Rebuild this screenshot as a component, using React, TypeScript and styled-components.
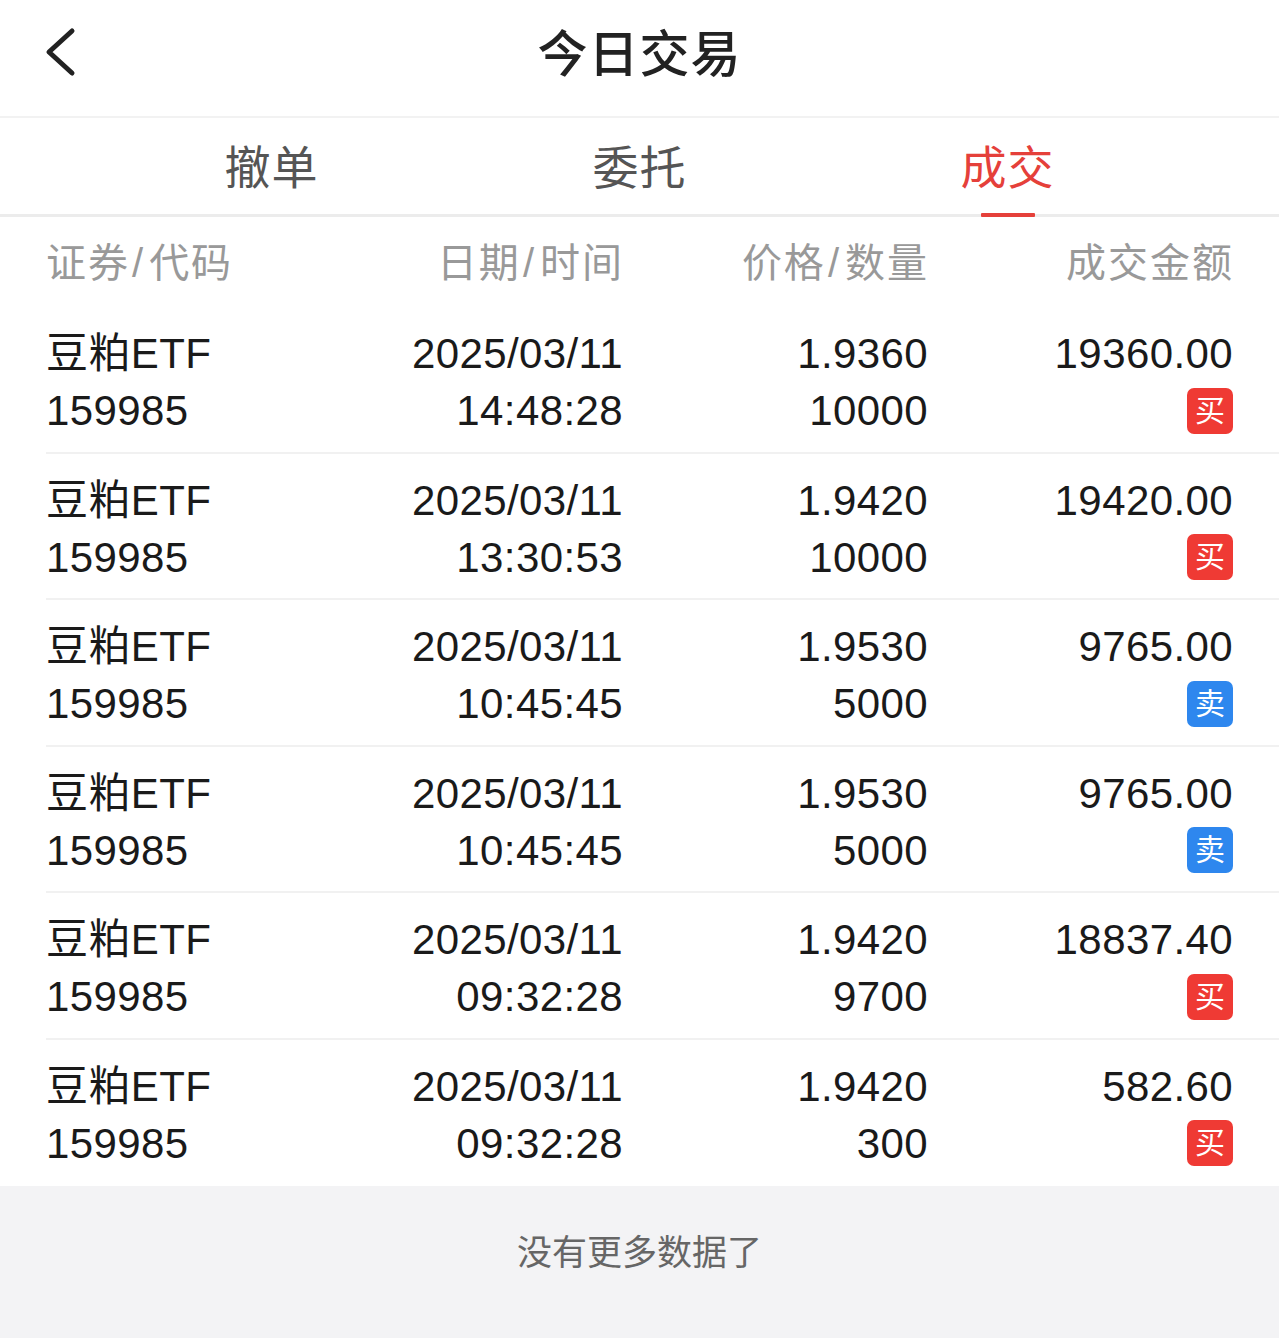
import React from 'react';
import styled, { createGlobalStyle, css } from 'styled-components';

const GlobalStyle = createGlobalStyle`
  html, body {
    margin: 0;
    padding: 0;
    background: #ffffff;
  }
  body {
    font-family: 'Liberation Sans', 'Noto Sans CJK SC', sans-serif;
    color: #1a1a1a;
  }
`;

const Page = styled('div')`
  width: 100%;
  min-height: 1338px;
  background: #ffffff;
  display: flex;
  flex-direction: column;
`;

const NavBar = styled('header')`
  height: 116px;
  display: grid;
  grid-template-columns: 1fr auto 1fr;
  align-items: center;
  padding: 0 40px;
  box-sizing: border-box;
`;

const BackButton = styled('button')`
  justify-self: start;
  display: flex;
  align-items: center;
  padding: 0;
  border: none;
  background: none;
  cursor: pointer;
  margin-top: -13px;
`;

const Title = styled('h1')`
  margin: 0;
  font-size: 50px;
  font-weight: 500;
  color: #222222;
  letter-spacing: 1px;
  margin-top: -17px;
`;

const TabBar = styled('nav')`
  height: 101px;
  box-sizing: border-box;
  border-top: 2px solid #f2f2f2;
  border-bottom: 3px solid #ececec;
  display: grid;
  grid-template-columns: repeat(3, 368px);
  justify-content: center;
`;

const Tab = styled('div')<{ $active?: boolean }>`
  position: relative;
  display: flex;
  align-items: center;
  justify-content: center;
  font-size: 46px;
  color: ${(p) => (p.$active ? '#e5403a' : '#555555')};
  padding-bottom: 4px;
  letter-spacing: 1px;

  ${(p) =>
    p.$active &&
    css`
      &::after {
        content: '';
        position: absolute;
        left: 50%;
        bottom: -3px;
        width: 54px;
        height: 4px;
        margin-left: -27px;
        background: #e5403a;
        border-radius: 1px;
      }
    `}
`;

const columns = css`
  display: grid;
  grid-template-columns: 288px 288px 305px 305px;
`;

const HeadRow = styled('div')`
  ${columns}
  height: 90px;
  align-items: center;
  padding: 0 47px 0 46px;
  font-size: 40px;
  letter-spacing: 2px;
  color: #999999;
  padding-bottom: 4px;
  box-sizing: border-box;
`;

const Cell = styled('div')<{ $align?: 'left' | 'right' }>`
  text-align: ${(p) => p.$align ?? 'right'};
  white-space: nowrap;
  margin-right: ${(p) => (p.$align === 'left' ? '0' : '-2px')};
`;

const Slash = styled('span')`
  margin: 0 4px 0 2px;
`;

const List = styled('div')`
  display: flex;
  flex-direction: column;
`;

const Row = styled('div')`
  ${columns}
  margin-left: 46px;
  padding: 18px 47px 12.5px 0;
  border-bottom: 2px solid #f1f1f1;
  font-size: 42px;
  line-height: 57px;
  letter-spacing: 0.4px;
  color: #1a1a1a;

  &:last-child {
    border-bottom: none;
    padding-bottom: 14.5px;
  }
`;

const Line = styled('div')`
  height: 57px;
  display: flex;
  align-items: center;
`;

const Stack = styled('div')<{ $align?: 'left' | 'right' }>`
  display: flex;
  flex-direction: column;
  margin-right: ${(p) => (p.$align === 'left' ? '0' : '-1px')};

  & > ${Line} {
    justify-content: ${(p) => (p.$align === 'left' ? 'flex-start' : 'flex-end')};
  }
`;

const Badge = styled('span')<{ $side: 'buy' | 'sell' }>`
  width: 46px;
  height: 46px;
  border-radius: 7px;
  display: inline-flex;
  align-items: center;
  justify-content: center;
  font-size: 30px;
  line-height: 1;
  letter-spacing: 0;
  color: #ffffff;
  background: ${(p) => (p.$side === 'buy' ? '#ef3a34' : '#2e87ee')};
`;

const Footer = styled('div')`
  flex: 1;
  background: #f3f3f5;
  text-align: center;
  padding-top: 45px;
  font-size: 35px;
  line-height: 44px;
  color: #666666;
`;

type Trade = {
  date: string;
  time: string;
  price: string;
  qty: string;
  amount: string;
  side: 'buy' | 'sell';
};

const trades: Trade[] = [
  { date: '2025/03/11', time: '14:48:28', price: '1.9360', qty: '10000', amount: '19360.00', side: 'buy' },
  { date: '2025/03/11', time: '13:30:53', price: '1.9420', qty: '10000', amount: '19420.00', side: 'buy' },
  { date: '2025/03/11', time: '10:45:45', price: '1.9530', qty: '5000', amount: '9765.00', side: 'sell' },
  { date: '2025/03/11', time: '10:45:45', price: '1.9530', qty: '5000', amount: '9765.00', side: 'sell' },
  { date: '2025/03/11', time: '09:32:28', price: '1.9420', qty: '9700', amount: '18837.40', side: 'buy' },
  { date: '2025/03/11', time: '09:32:28', price: '1.9420', qty: '300', amount: '582.60', side: 'buy' },
];

function App() {
  return (
    <Page>
      <GlobalStyle />
      <NavBar>
        <BackButton aria-label="返回">
          <svg width="38" height="52" viewBox="0 0 38 52" fill="none">
            <polyline
              points="32,5 9,26 32,47"
              stroke="#222222"
              strokeWidth="5"
              strokeLinecap="round"
              strokeLinejoin="round"
            />
          </svg>
        </BackButton>
        <Title>今日交易</Title>
        <span />
      </NavBar>

      <TabBar>
        <Tab>撤单</Tab>
        <Tab>委托</Tab>
        <Tab $active>成交</Tab>
      </TabBar>

      <HeadRow>
        <Cell $align="left">
          证券<Slash>/</Slash>代码
        </Cell>
        <Cell>
          日期<Slash>/</Slash>时间
        </Cell>
        <Cell>
          价格<Slash>/</Slash>数量
        </Cell>
        <Cell>成交金额</Cell>
      </HeadRow>

      <List>
        {trades.map((t, i) => (
          <Row key={i}>
            <Stack $align="left">
              <Line>豆粕ETF</Line>
              <Line>159985</Line>
            </Stack>
            <Stack>
              <Line>{t.date}</Line>
              <Line>{t.time}</Line>
            </Stack>
            <Stack>
              <Line>{t.price}</Line>
              <Line>{t.qty}</Line>
            </Stack>
            <Stack>
              <Line>{t.amount}</Line>
              <Line>
                <Badge $side={t.side}>{t.side === 'buy' ? '买' : '卖'}</Badge>
              </Line>
            </Stack>
          </Row>
        ))}
      </List>

      <Footer>没有更多数据了</Footer>
    </Page>
  );
}

export default App;
